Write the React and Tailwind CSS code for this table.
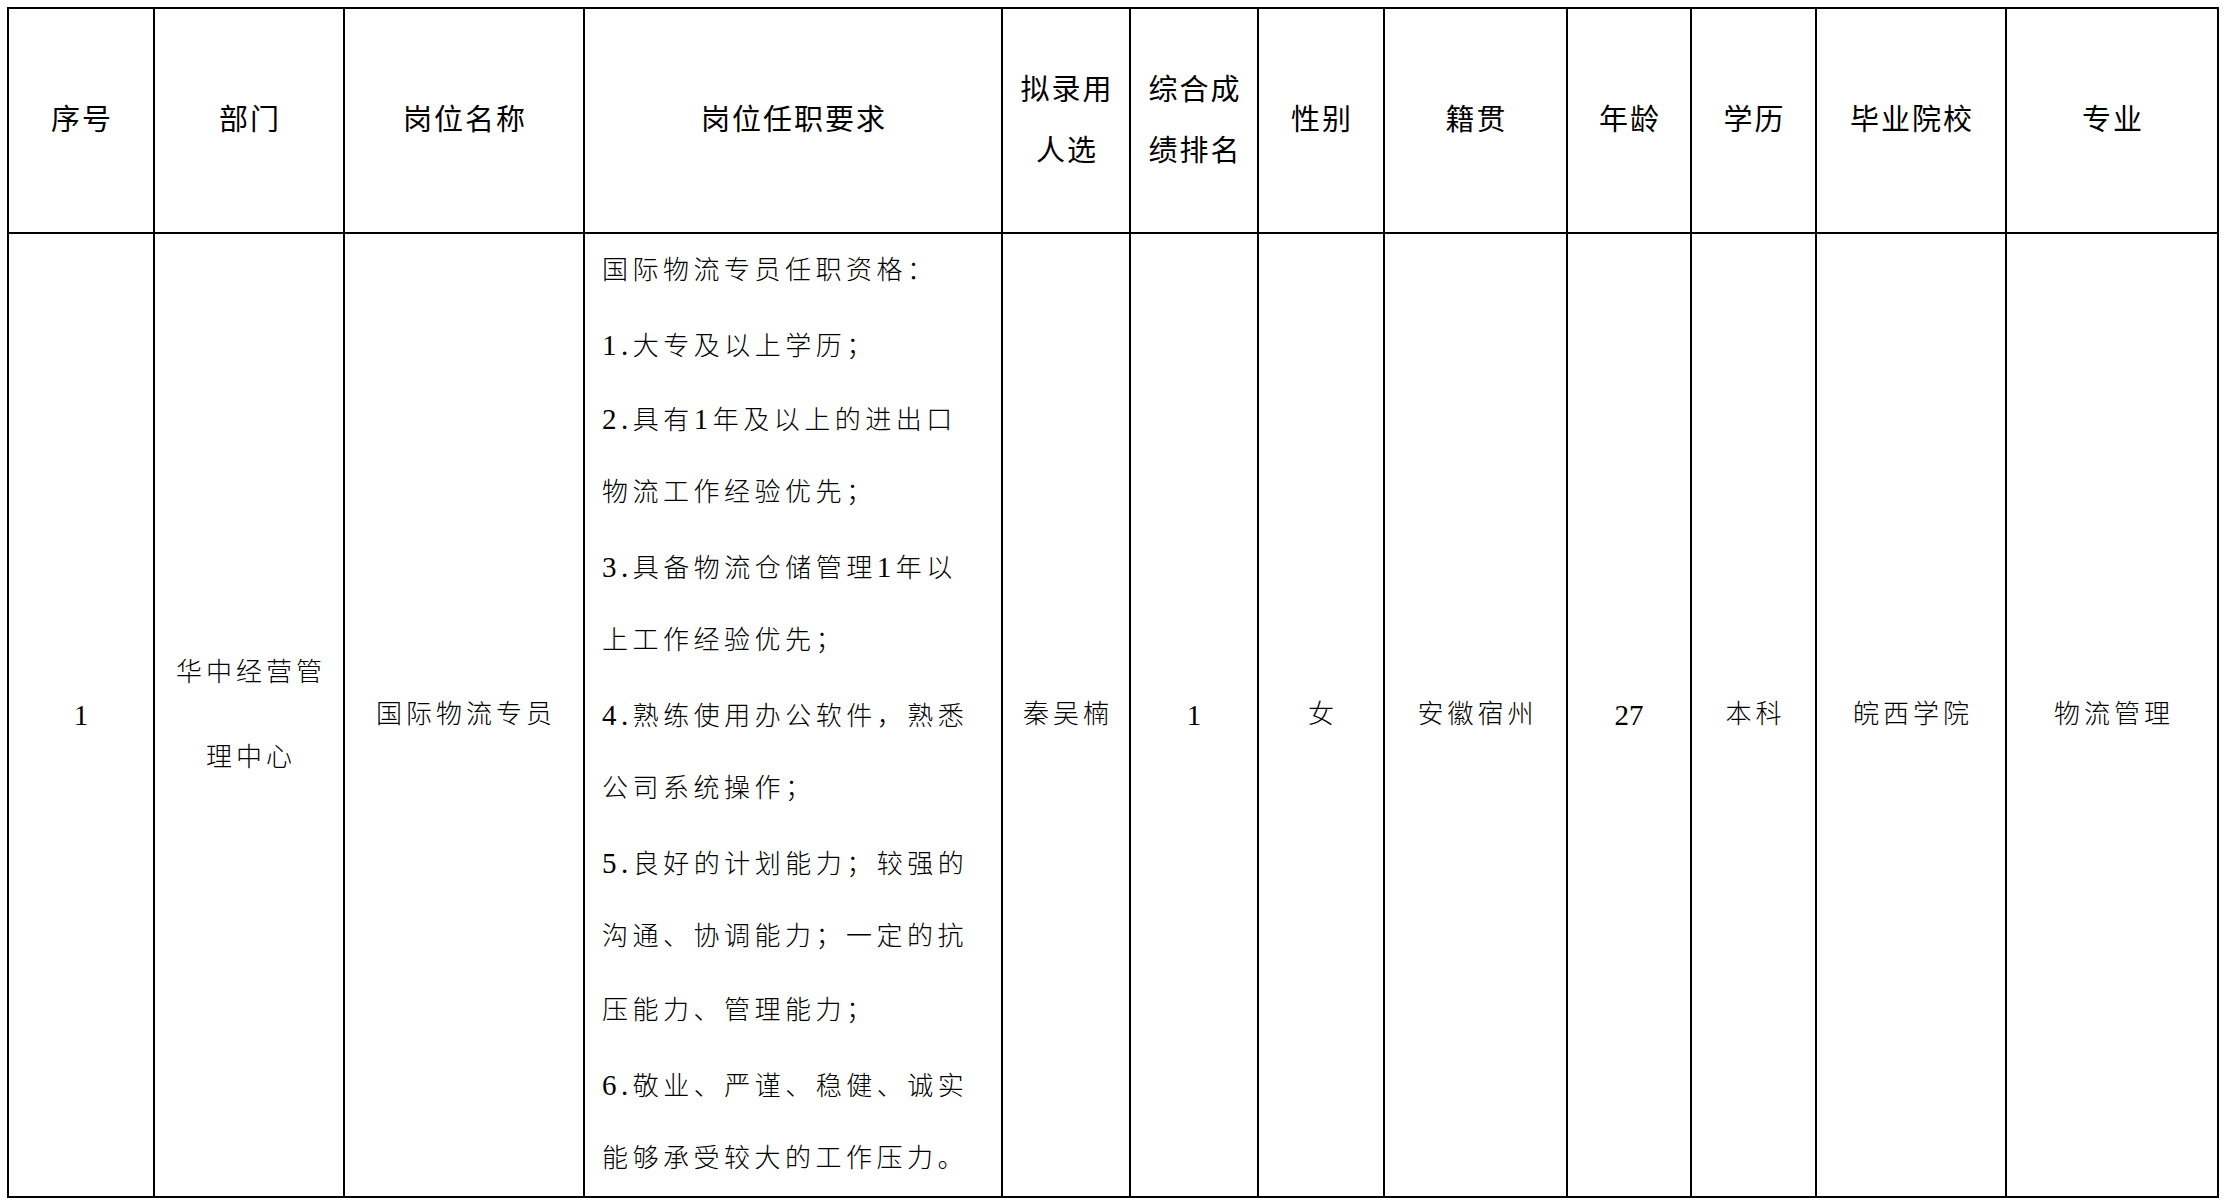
const cols = [146, 190, 240, 418, 128, 128, 126, 183, 124, 125, 190, 212]

const headers = [
  ['序号'],
  ['部门'],
  ['岗位名称'],
  ['岗位任职要求'],
  ['拟录用', '人选'],
  ['综合成', '绩排名'],
  ['性别'],
  ['籍贯'],
  ['年龄'],
  ['学历'],
  ['毕业院校'],
  ['专业'],
]

const requirements = [
  [null, '国际物流专员任职资格：'],
  ['1.', '大专及以上学历；'],
  ['2.', '具有', '1', '年及以上的进出口'],
  [null, '物流工作经验优先；'],
  ['3.', '具备物流仓储管理', '1', '年以'],
  [null, '上工作经验优先；'],
  ['4.', '熟练使用办公软件，熟悉'],
  [null, '公司系统操作；'],
  ['5.', '良好的计划能力；较强的'],
  [null, '沟通、协调能力；一定的抗'],
  [null, '压能力、管理能力；'],
  ['6.', '敬业、严谨、稳健、诚实'],
  [null, '能够承受较大的工作压力。'],
]

const cell = 'border-r-2 border-b-2 border-black flex flex-col items-center justify-center text-black'

function Plain({ children }) {
  return (
    <div className={cell}>
      <span className="text-[26px] font-light tracking-[4px] pl-[4px] leading-none whitespace-nowrap">{children}</span>
    </div>
  )
}

function Num({ children }) {
  return (
    <div className={cell}>
      <span className="text-[29px] leading-none">{children}</span>
    </div>
  )
}

function ReqLine({ parts }) {
  return (
    <div className="whitespace-nowrap h-[74px] leading-[74px]">
      {parts.map((p, i) => {
        if (p === null) return null
        const isDigit = /^[0-9.]+$/.test(p)
        return isDigit
          ? <span key={i} className="text-[29px]">{p}</span>
          : <span key={i}>{p}</span>
      })}
    </div>
  )
}

export default function App() {
  return (
    <div className="w-[2224px] h-[1200px] bg-white pt-[7px] pl-[7px] font-['Liberation_Serif','Noto_Sans_CJK_SC',serif]">
      <div
        className="grid border-l-2 border-t-2 border-black w-[2212px]"
        style={{ gridTemplateColumns: cols.map(c => `${c}px`).join(' ') }}
      >
        {headers.map((h, i) => (
          <div key={i} className={`${cell} h-[225px]`}>
            {h.map((line, j) => (
              <span
                key={j}
                className={`text-[29px] tracking-[2px] pl-[2px] whitespace-nowrap ${h.length > 1 ? 'leading-[61px]' : 'leading-none'}`}
              >
                {line}
              </span>
            ))}
          </div>
        ))}

        <Num>1</Num>
        <div className={cell}>
          <span className="text-[26px] font-light tracking-[4px] pl-[4px] leading-[85px] whitespace-nowrap">华中经营管</span>
          <span className="text-[26px] font-light tracking-[4px] pl-[4px] leading-[85px] whitespace-nowrap">理中心</span>
        </div>
        <Plain>国际物流专员</Plain>
        <div className="border-r-2 border-b-2 border-black pl-[17px] text-[26px] font-light tracking-[4.5px] text-black">
          {requirements.map((parts, i) => <ReqLine key={i} parts={parts} />)}
        </div>
        <Plain>秦吴楠</Plain>
        <Num>1</Num>
        <Plain>女</Plain>
        <Plain>安徽宿州</Plain>
        <Num>27</Num>
        <Plain>本科</Plain>
        <Plain>皖西学院</Plain>
        <Plain>物流管理</Plain>
      </div>
    </div>
  )
}
